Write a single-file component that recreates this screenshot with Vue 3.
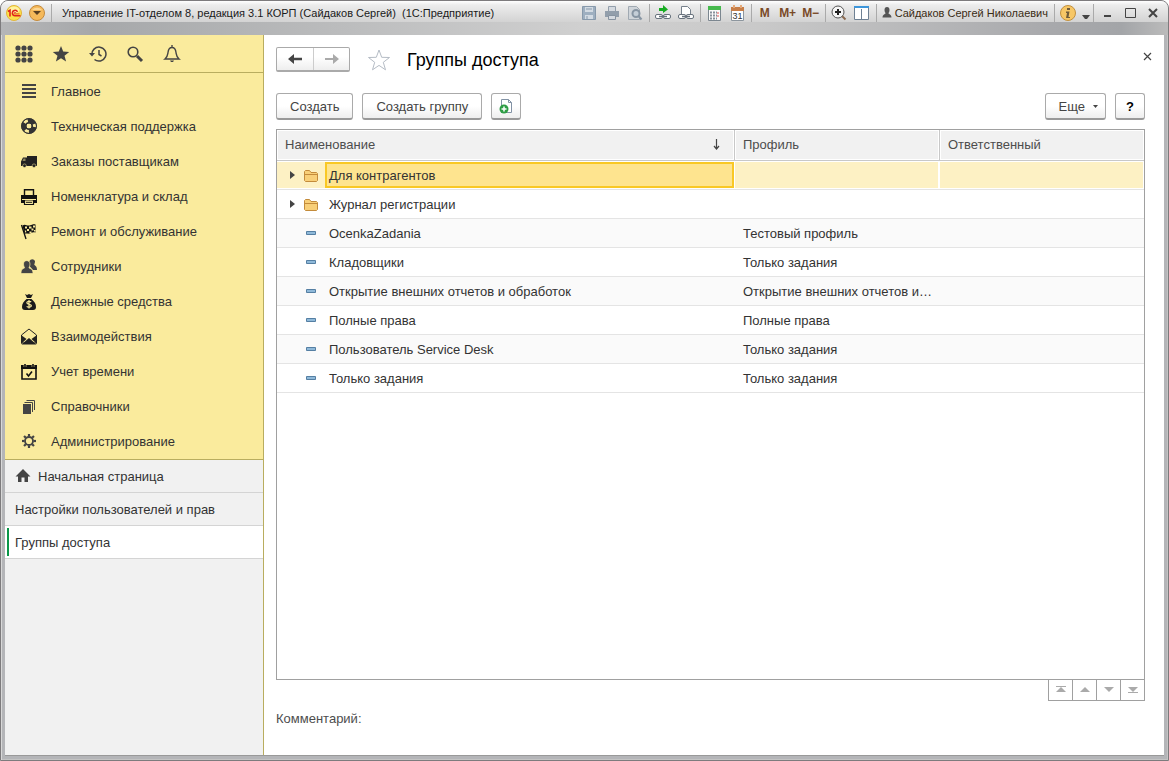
<script setup>
import { ref } from 'vue'

const sections = [
  { icon: 'lines', label: 'Главное' },
  { icon: 'support', label: 'Техническая поддержка' },
  { icon: 'truck', label: 'Заказы поставщикам' },
  { icon: 'printer', label: 'Номенклатура и склад' },
  { icon: 'flag', label: 'Ремонт и обслуживание' },
  { icon: 'people', label: 'Сотрудники' },
  { icon: 'money', label: 'Денежные средства' },
  { icon: 'mail', label: 'Взаимодействия' },
  { icon: 'calendar', label: 'Учет времени' },
  { icon: 'books', label: 'Справочники' },
  { icon: 'gear', label: 'Администрирование' },
]

const rows = [
  { name: 'Для контрагентов', profile: '', folder: true },
  { name: 'Журнал регистрации', profile: '', folder: true },
  { name: 'OcenkaZadania', profile: 'Тестовый профиль' },
  { name: 'Кладовщики', profile: 'Только задания' },
  { name: 'Открытие внешних отчетов и обработок', profile: 'Открытие внешних отчетов и…' },
  { name: 'Полные права', profile: 'Полные права' },
  { name: 'Пользователь Service Desk', profile: 'Только задания' },
  { name: 'Только задания', profile: 'Только задания' },
]

const selected = ref(0)
const comment = ref('')
const teeth = [0, 45, 90, 135, 180, 225, 270, 315]
</script>

<template>
  <div class="window">
    <header class="titlebar">
      <button class="tb" aria-label="1С">
        <svg width="16" height="16" viewBox="0 0 16 16">
          <circle cx="8" cy="8" r="7.5" fill="#fbe04a" stroke="#e2b53a" />
          <ellipse cx="8" cy="5" rx="5.5" ry="3.5" fill="#fff3a0" />
          <path d="M2 6.500l2-1.300V11.500" fill="none" stroke="#e0241c" stroke-width="1.600" />
          <path d="M11.500 6.800A2.700 2.700 0 1 0 9 10.700H14.500" fill="none" stroke="#e0241c" stroke-width="1.500" />
          <path d="M9.800 8a.8.8 0 1 0-.8.900H13.500" fill="none" stroke="#e0241c" stroke-width=".8" />
        </svg>
      </button>
      <button class="tb drop" aria-label="Главное меню">
        <svg width="16" height="16" viewBox="0 0 16 16">
          <circle cx="8" cy="8" r="7.5" fill="#f5b95a" stroke="#c48a3c" />
          <path d="M3 5a6 5 0 0 1 10 0z" fill="#fbd795" />
          <path d="M4 6h8l-4 4z" fill="#5a4022" />
        </svg>
      </button>
      <i class="sep"></i>
      <h1 class="caption">Управление IT-отделом 8, редакция 3.1 КОРП (Сайдаков Сергей)&nbsp; (1С:Предприятие)</h1>
      <div class="tools">
        <button class="tb" aria-label="Сохранить">
          <svg width="16" height="16" viewBox="0 0 16 16">
            <path d="M1.5 1.5h13v13h-13z" fill="#9eafc0" stroke="#8799ab" />
            <path d="M4 2h8v5H4zM4 10h8v4H4z" fill="#d3dbe3" /><path d="M5 4h6M6 11v3" stroke="#8799ab" />
          </svg>
        </button>
        <button class="tb" aria-label="Печать">
          <svg width="16" height="16" viewBox="0 0 16 16">
            <path d="M4.5 6V1.5h7V6" fill="#d5dae0" stroke="#929eab" />
            <path d="M1 6h14v6H1z" fill="#929eab" /><path d="M4.5 10.5h7v4h-7z" fill="#d5dae0" stroke="#8793a0" />
          </svg>
        </button>
        <button class="tb" aria-label="Предварительный просмотр">
          <svg width="16" height="16" viewBox="0 0 16 16">
            <path d="M1.500 1.500h8l3 3v10h-11z" fill="#d0d5da" stroke="#a0a9b2" />
            <circle cx="9" cy="8.500" r="3.500" fill="#c4ced7" stroke="#8795a3" stroke-width="2" /><path d="M11.500 11l3 3.500" stroke="#8795a3" stroke-width="2" />
          </svg>
        </button>
        <i class="sep"></i>
        <button class="tb" aria-label="Перейти по ссылке">
          <svg width="16" height="16" viewBox="0 0 16 16">
            <path d="M4 3h4V0l5 4.500L8 8V6H4z" fill="#18ad23" />
            <rect x="0.500" y="9.500" width="7" height="4" rx="1.500" fill="#fff" stroke="#68727d" /><rect x="8.500" y="9.500" width="7" height="4" rx="1.500" fill="#fff" stroke="#68727d" />
            <path d="M4 11.500h8" stroke="#68727d" stroke-width="1.500" />
          </svg>
        </button>
        <button class="tb" aria-label="Получить ссылку">
          <svg width="16" height="16" viewBox="0 0 16 16">
            <path d="M3.500 9V1.500h6l3 3V9" fill="#fff" stroke="#77818c" />
            <rect x="0.500" y="9.500" width="7" height="4" rx="1.500" fill="#fff" stroke="#68727d" /><rect x="8.500" y="9.500" width="7" height="4" rx="1.500" fill="#fff" stroke="#68727d" />
            <path d="M4 11.500h8" stroke="#68727d" stroke-width="1.500" />
          </svg>
        </button>
        <i class="sep"></i>
        <button class="tb" aria-label="Калькулятор">
          <svg width="16" height="16" viewBox="0 0 16 16">
            <path d="M2.500 1.500h12v14h-12z" fill="#fafafa" stroke="#7c8790" /><path d="M2 1h13v4H2z" fill="#46b94d" />
            <path d="M4 7.500h7M4 10.500h7M4 13.500h7" stroke="#87919b" stroke-width="2" stroke-dasharray="2 1" /><path d="M12 7v5" stroke="#e05050" stroke-dasharray="2 1" />
          </svg>
        </button>
        <button class="tb" aria-label="Календарь">
          <svg width="16" height="16" viewBox="0 0 16 16">
            <path d="M2.500 3.500h12v12h-12z" fill="#fff" stroke="#8d969e" /><path d="M2 2h13v4H2z" fill="#c77e48" /><path d="M5 0v3M12 0v3" stroke="#e5aa7a" stroke-width="2" />
            <text x="8.500" y="14" text-anchor="middle" font-family="Liberation Sans" font-size="9" fill="#333">31</text>
          </svg>
        </button>
        <i class="sep"></i>
        <button class="tb mem">M</button>
        <button class="tb mem">M+</button>
        <button class="tb mem">M−</button>
        <i class="sep"></i>
        <button class="tb" aria-label="Увеличить">
          <svg width="16" height="16" viewBox="0 0 16 16">
            <path d="M11 11l3.500 3.500" stroke="#8a6a50" stroke-width="2" /><circle cx="7" cy="7" r="6" fill="#f6f6f6" stroke="#555" />
            <path d="M4 7h6M7 4v6" stroke="#222" stroke-width="2" />
          </svg>
        </button>
        <button class="tb" aria-label="Панели">
          <svg width="16" height="16" viewBox="0 0 16 16">
            <path d="M.5 1.500h14v13H.5zM7.500 4v11" fill="#fff" stroke="#6e8093" /><path d="M0 1h15v2H0z" fill="#3d96db" />
          </svg>
        </button>
        <i class="sep"></i>
        <button class="tb user">
          <svg width="10" height="12" viewBox="0 0 10 12">
            <path d="M2.500 3a2.500 3 0 0 1 5 0c0 2-1 2.500-1 3.500C8 7.500 9.500 8 9.500 10.500h-9C.5 8 2 7.500 3.500 6.500 3.500 5.500 2.500 5 2.500 3z" fill="#555" />
          </svg>
          Сайдаков Сергей Николаевич
        </button>
        <i class="sep"></i>
        <button class="tb" aria-label="Информация">
          <svg width="16" height="16" viewBox="0 0 16 16">
            <circle cx="8" cy="8" r="7.500" fill="#f7c766" stroke="#c2903e" /><path d="M7 3h3v2H7zM6 6.500h3.500L8.500 12H10v1H6l1-5H6z" fill="#705c3a" />
          </svg>
        </button>
        <button class="tb service" aria-label="Сервис">
          <svg width="8" height="16" viewBox="0 0 8 16"><path d="M0 10h8l-3 4H3z" fill="#444" /></svg>
        </button>
        <i class="sep"></i>
        <button class="tb" aria-label="Свернуть">
          <svg width="16" height="12" viewBox="0 0 16 12"><path d="M5 9h7" stroke="#444" stroke-width="2" /></svg>
        </button>
        <button class="tb" aria-label="Развернуть">
          <svg width="16" height="12" viewBox="0 0 16 12"><path d="M3.500 1.500h10v9h-10z" fill="none" stroke="#444" /></svg>
        </button>
        <button class="tb" aria-label="Закрыть">
          <svg width="16" height="12" viewBox="0 0 16 12"><path d="M4 2l8 8M12 2l-8 8" stroke="#444" stroke-width="2" /></svg>
        </button>
      </div>
    </header>

    <div class="body">
      <aside class="sidebar">
        <div class="quick">
          <button aria-label="Все функции">
            <svg width="18" height="18" viewBox="0 0 18 18" fill="#444">
              <template v-for="y in 3" :key="y"><circle v-for="x in 3" :key="x" :cx="x * 6 - 3" :cy="y * 6 - 3" r="2.600" /></template>
            </svg>
          </button>
          <button aria-label="Избранное">
            <svg width="18" height="18" viewBox="0 0 18 18"><path d="M9 1l2.200 5.600 6 .4-4.700 3.700 1.600 5.900L9 13.300l-5.100 3.300 1.600-5.900L.8 7l6-.4z" fill="#444" /></svg>
          </button>
          <button aria-label="История">
            <svg width="18" height="18" viewBox="0 0 18 18" fill="none" stroke="#444" stroke-width="1.500"><path d="M3 10a7 7 0 1 1 2.500 4.500M10 5v4.500l2.500 1.500" /><path d="M0 8h6l-3 3.500z" fill="#444" stroke="none" /></svg>
          </button>
          <button aria-label="Поиск">
            <svg width="18" height="18" viewBox="0 0 18 18" fill="none" stroke="#444"><circle cx="7" cy="7" r="4.800" stroke-width="1.600" /><path d="M11 11l5 5" stroke-width="3" /></svg>
          </button>
          <button aria-label="Оповещения">
            <svg width="18" height="18" viewBox="0 0 18 18" fill="none" stroke="#444" stroke-width="1.400"><path d="M2 14c2.500-2 2.500-3.500 3-6.500.3-3 1.500-5 4-5s3.700 2 4 5c.5 3 .5 4.500 3 6.500zM9 0v2.500" /><path d="M7 15.500h4L10 17H8z" fill="#444" stroke="none" /></svg>
          </button>
        </div>

        <nav class="sections">
          <a v-for="s in sections" :key="s.label" href="#" @click.prevent>
            <svg width="18" height="18" viewBox="0 0 18 18">
              <path v-if="s.icon === 'lines'" d="M2 2h14M2 6h14M2 10h14M2 14h14" stroke="#444" stroke-width="2" />
              <g v-else-if="s.icon === 'support'" fill="none">
                <circle cx="9" cy="8" r="5.300" stroke="#333" stroke-width="5" />
                <circle cx="9" cy="8" r="5.500" stroke="#faeb9d" stroke-width="3" stroke-dasharray="4 7.520" stroke-dashoffset="3" />
                <circle cx="9" cy="8" r="7.500" stroke="#333" /><circle cx="9" cy="8" r="3" stroke="#333" />
              </g>
              <g v-else-if="s.icon === 'truck'">
                <path d="M7 3h10v10H1V8.500L3 4.500h4z" fill="#222" /><path d="M3.500 5.500h2v2.500h-3z" fill="#8d8660" />
                <circle cx="4.500" cy="12.700" r="1.800" fill="#222" stroke="#faeb9d" stroke-width=".5" /><circle cx="14" cy="12.700" r="1.800" fill="#222" stroke="#faeb9d" stroke-width=".5" />
              </g>
              <g v-else-if="s.icon === 'printer'">
                <path d="M4.500 8V1.700h9V8" fill="none" stroke="#111" stroke-width="1.400" /><path d="M1 7h16v8H1z" fill="#111" />
                <path d="M4.500 12h9v4.500h-9z" fill="#faeb9d" stroke="#111" stroke-width="1.200" /><path d="M2 11.500h14M6 14.500h6" stroke="#faeb9d" /><path d="M6 14.300h6" stroke="#111" />
              </g>
              <g v-else-if="s.icon === 'flag'">
                <path d="M1.500 2l4.500 14" stroke="#111" stroke-width="1.300" />
                <path d="M2.500 2.500c3-2 4 .5 7 0s3-1.500 6-1v8c-3-1-4 .5-6 1s-3-.5-5 .5z" fill="#111" />
                <path d="M5 3.500h2v2H5zM9 3.500h2.500v2H9zM13 2.500h2v2h-2zM7 6h2v2H7zM11.500 5.500h2v2h-2zM9.500 8.500h2V10h-2zM14 7h1.500v1.500H14zM4.700 7.500h1.500v2h-1z" fill="#faeb9d" />
              </g>
              <g v-else-if="s.icon === 'people'" fill="#444">
                <path d="M9.500 3a3 3 0 0 1 5.500 0c0 2-.6 3-.8 3.800C16 8.500 17 9 17 12h-4L9.500 8z" />
                <path d="M3.500 6c0-4.500 6.500-4.500 6.500 0 0 2-1 3-1 4 2 1 4 1.200 4 5.500H1c0-4.300 1.500-4.500 3.500-5.500 0-1-1-2-1-4z" stroke="#faeb9d" stroke-width=".7" />
              </g>
              <g v-else-if="s.icon === 'money'">
                <path d="M5 1l2 1 2-1 2 1 2-1-2 4H7zM6.500 6h5c3 2.500 4.500 5 4.500 8 0 2-1 3-3 3H5c-2 0-3-1-3-3 0-3 1.500-5.500 4.500-8z" fill="#1a1a1a" />
                <path d="M11.200 9c-1-1-4.400-1-4.400.8 0 2 4.600 1 4.600 3 0 1.700-3.600 1.700-4.700.6M9 7v8.500" fill="none" stroke="#faeb9d" stroke-width="1.200" />
              </g>
              <g v-else-if="s.icon === 'mail'">
                <path d="M1.500 7L9 1 16.500 7v8h-15z" fill="none" stroke="#222" /><path d="M1 7l5.500 4L1 16zM17 7l-5.500 4 5.500 5zM1.500 16.500L9 10l7.500 6.500z" fill="#222" />
              </g>
              <g v-else-if="s.icon === 'calendar'">
                <path d="M2 4h14v12H2z" fill="none" stroke="#111" stroke-width="1.600" /><path d="M1 2h16v4H1z" fill="#111" />
                <path d="M5 1v3M13 1v3" stroke="#faeb9d" stroke-width="2.600" /><path d="M5 1v3M13 1v3M6.500 10.500l2 2.500L12 8.500" fill="none" stroke="#111" stroke-width="1.600" />
              </g>
              <g v-else-if="s.icon === 'books'" fill="none" stroke="#444">
                <path d="M3 6h8v10H3z" fill="#444" stroke="none" /><path d="M4.500 4.500h8V14M6.500 2.500h8V12" />
              </g>
              <g v-else transform="translate(9 8)">
                <circle r="4" fill="none" stroke="#444" stroke-width="1.800" />
                <path v-for="t in teeth" :key="t" d="M0-4.500V-7" :transform="`rotate(${t})`" stroke="#444" stroke-width="2.200" />
              </g>
            </svg>
            <span>{{ s.label }}</span>
          </a>
        </nav>

        <nav class="tabs">
          <a href="#" @click.prevent>
            <svg width="16" height="14" viewBox="0 0 16 14"><path d="M8 0l7.500 7.500H13V13H9.500V8.500h-3V13H3V7.500H.5z" fill="#444" /></svg>
            Начальная страница
          </a>
          <a href="#" @click.prevent>Настройки пользователей и прав</a>
          <a href="#" class="current" @click.prevent>Группы доступа</a>
        </nav>
      </aside>

      <main class="form">
        <div class="heading">
          <div class="history">
            <button aria-label="Назад"><svg width="14" height="12" viewBox="0 0 14 12"><path d="M0 6l6-5v3.700h8v2.600H6V11z" fill="#444" /></svg></button>
            <button aria-label="Вперед"><svg width="14" height="12" viewBox="0 0 14 12"><path d="M14 6L8 1v4H0v2h8v4z" fill="#aaa" /></svg></button>
          </div>
          <button class="plain star" aria-label="В избранное">
            <svg width="24" height="24" viewBox="0 0 24 24"><path d="M12 2l2.700 7.300 7.800.2-6.200 4.800 2.200 7.500L12 17.400l-6.500 4.400 2.200-7.500L1.500 9.500l7.800-.2z" fill="none" stroke="#b5bcc5" /></svg>
          </button>
          <h2>Группы доступа</h2>
          <button class="plain close" aria-label="Закрыть форму">
            <svg width="9" height="9" viewBox="0 0 9 9"><path d="M1 1l7 7M8 1L1 8" stroke="#444" stroke-width="1.200" /></svg>
          </button>
        </div>

        <div class="toolbar">
          <button class="btn">Создать</button>
          <button class="btn">Создать группу</button>
          <button class="btn square" aria-label="Создать копированием">
            <svg width="16" height="16" viewBox="0 0 16 16">
              <path d="M3.500 1.500h7l3 3v10h-10z" fill="#fff" stroke="#8292a5" /><path d="M10.500 1.500v3h3" fill="none" stroke="#8292a5" />
              <circle cx="6" cy="11" r="4.500" fill="#2e9d45" /><path d="M3.500 11h5M6 8.500v5" stroke="#fff" stroke-width="1.500" />
            </svg>
          </button>
          <span class="grow"></span>
          <button class="btn more">Еще <svg width="5" height="3" viewBox="0 0 5 3"><path d="M0 0h5L2.500 3z" fill="#444" /></svg></button>
          <button class="btn square help">?</button>
        </div>

        <div class="list">
          <table>
            <colgroup><col /><col class="side" /><col class="side" /></colgroup>
            <thead>
              <tr>
                <th><div class="head">Наименование <svg width="7" height="11" viewBox="0 0 7 11"><path d="M3.500 0v10M1 7l2.500 3L6 7" fill="none" stroke="#444" stroke-width="1.200" /></svg></div></th>
                <th><div class="head">Профиль</div></th>
                <th><div class="head">Ответственный</div></th>
              </tr>
            </thead>
            <tbody>
              <tr v-for="(r, i) in rows" :key="r.name" :class="{ selected: i === selected }" @click="selected = i">
                <td>
                  <div class="cell name">
                    <button v-if="r.folder" class="plain expand" aria-label="Развернуть группу"><svg width="5" height="8" viewBox="0 0 5 8"><path d="M0 0l5 4-5 4z" fill="#444" /></svg></button>
                    <span v-else class="expand"></span>
                    <svg v-if="r.folder" class="kind" width="16" height="16" viewBox="0 0 16 16"><path d="M1.500 13.500v-9l1-1h4l1.500 2h5.500l1 1v7l-1 1h-11z" fill="#f8cf78" stroke="#c38b3b" /><path d="M2 7.500h12" stroke="#c38b3b" /></svg>
                    <svg v-else class="kind" width="16" height="16" viewBox="0 0 16 16"><path d="M3.500 6.500h9v3h-9z" fill="#8fb9d9" stroke="#557fa3" /></svg>
                    <span class="label">{{ r.name }}</span>
                  </div>
                </td>
                <td><div class="cell text">{{ r.profile }}</div></td>
                <td><div class="cell text"></div></td>
              </tr>
            </tbody>
          </table>
        </div>
        <div class="pager">
          <button aria-label="В начало"><svg width="10" height="8" viewBox="0 0 10 8"><path d="M0 .5h10" stroke="#aaa" /><path d="M5 1l5 5H0z" fill="#aaa" /></svg></button>
          <button aria-label="Вверх"><svg width="10" height="8" viewBox="0 0 10 8"><path d="M5 1l5 5H0z" fill="#aaa" /></svg></button>
          <button aria-label="Вниз"><svg width="10" height="8" viewBox="0 0 10 8"><path d="M5 6l5-5H0z" fill="#aaa" /></svg></button>
          <button aria-label="В конец"><svg width="10" height="8" viewBox="0 0 10 8"><path d="M0 6.500h10" stroke="#aaa" /><path d="M5 6l5-5H0z" fill="#aaa" /></svg></button>
        </div>
        <div class="comment">
          <label for="comment">Комментарий:</label>
          <input id="comment" v-model="comment" type="text" />
        </div>
      </main>
    </div>
  </div>
</template>

<style>
html, body { background: #fff; }
</style>

<style scoped>
* { box-sizing: border-box; }
.window {
  display: flex; flex-direction: column; min-height: 100vh;
  padding: 0 4px 4px; border: 1px solid #7d7b7d; border-radius: 8px 8px 0 0;
  background: #b4b5b8;
  box-shadow: inset 1px 1px 0 #d8d8d8, inset -1px -1px 0 #c4c4c4;
  font: 13px/15px "Liberation Sans", Arial, sans-serif; color: #333;
}
button { font: inherit; color: inherit; padding: 0; margin: 0; border: 0; background: none; cursor: pointer; }
svg { display: block; flex: none; }
a { color: inherit; text-decoration: none; }
i.sep { width: 1px; height: 18px; background: #aaa; flex: none; }

.titlebar {
  display: flex; align-items: center; height: 34px; padding: 0 7px 10px 1px; margin: 0 -4px; border-radius: 7px 7px 0 0;
  background:
    linear-gradient(#fff 0, #ececec 4px, #d3d3d3 21px, transparent 21px),
    linear-gradient(90deg, #b5b6b8, #a6a8aa 8%, #d0d0d0 50%, #c9c9c9 65%, #a8a9ac 90%, #a3a5a8 96%, #bbb);
  font-size: 11px; line-height: 14px; color: #1a1a1a;
}
.titlebar > .tb { margin-left: 4px; }
.titlebar > .drop { margin: 0 6px 0 7px; }
.caption { flex: 1; margin: 0 0 0 10px; font-size: 11px; font-weight: 400; white-space: nowrap; overflow: hidden; }
.tools { display: flex; align-items: center; gap: 7px; }
.tools .sep { margin: 0 -2px 0 -1px; }
.tools .service { margin: 0 -3px 0 -1px; }
.mem { width: 16px; display: flex; justify-content: center; font-weight: 700; font-size: 12px; color: #7a4a28; }
.user { display: flex; align-items: center; gap: 3px; color: #3a2c14; white-space: nowrap; }

.body { flex: 1; display: flex; background: #fff; border-bottom: 1px solid #999; }
.sidebar { width: 259px; flex: none; display: flex; flex-direction: column; background: #f1f1f1; border-right: 1px solid #b9ad5f; }
.quick { display: flex; gap: 19px; align-items: center; height: 38px; padding: 0 9px 0 10px; background: #faeb9d; border-bottom: 1px solid #b9ad5f; }
.sections { padding-top: 1px; background: #faeb9d; border-bottom: 1px solid #b9ad5f; }
.sections a { display: flex; align-items: center; gap: 13px; height: 35px; padding-left: 15px; }
.tabs a { display: flex; align-items: center; gap: 7px; height: 33px; padding-left: 10px; border-bottom: 1px solid #d4d4d4; }
.tabs .current { background: linear-gradient(#0a9648, #0a9648) 2px 2px / 2px 28px no-repeat #fff; }

.form { flex: 1; min-width: 0; display: flex; flex-direction: column; padding: 12px 19px 28px 12px; }
.heading { display: flex; align-items: center; height: 25px; }
.history { display: flex; height: 25px; border: 1px solid #aaa; border-bottom: 2px solid #aaa; border-radius: 2px; background: linear-gradient(#fff 40%, #eee); }
.history button { width: 36px; display: flex; align-items: center; justify-content: center; }
.history button + button { border-left: 1px solid #ccc; }
.star { margin: 0 16px 0 17px; }
h2 { margin: 0; flex: 1; font-size: 18px; line-height: 26px; font-weight: 400; color: #000; }
.close { align-self: flex-start; margin: 5px -8px 0 0; padding: 0 1px; }
.toolbar { display: flex; gap: 9px; margin: 21px 0 9px; height: 27px; }
.btn { height: 27px; padding: 0 13px; border: 1px solid #aaa; border-bottom: 2px solid #999; border-radius: 3px; background: linear-gradient(#fff 50%, #eee); color: #444; }
.square { width: 30px; padding: 0; display: flex; align-items: center; justify-content: center; }
.more { display: flex; align-items: center; gap: 8px; padding: 0 7px 0 13px; }
.help { color: #000; font-weight: 700; }
.grow { flex: 1; }

.list { flex: 1; border: 1px solid #a0a0a0; }
table { width: 100%; table-layout: fixed; border-spacing: 0; }
.side { width: 205px; }
th { height: 31px; padding: 1px; text-align: left; font-weight: 400; color: #4d4d4d; border-bottom: 1px solid #c8c8c8; }
th + th { border-left: 1px solid #c8c8c8; }
.head { display: flex; align-items: center; justify-content: space-between; height: 28px; padding: 0 13px 2px 7px; background: #f1f1f1; }
td { height: 29px; padding: 1px 0; border-bottom: 1px solid #e4e4e4; }
tr:nth-child(odd) td { background: #fafafa; }
tbody tr.selected td { background: #fff; }
.cell { height: 26px; line-height: 28px; white-space: nowrap; overflow: hidden; }
.text { padding: 0 4px 0 8px; margin: 0 1px 0 1px; }
.name { display: flex; align-items: center; }
.expand { box-sizing: content-box; width: 5px; padding-left: 8px; margin: 0 5px; }
.expand + .kind { margin: 0 6px 0 3px; }
.label { flex: 1; height: 26px; line-height: 24px; border: 2px solid transparent; padding-left: 2px; }
.selected .cell { background: #fdf1c4; }
.selected .label { background: #fee48f; border-color: #f9c825; }
.pager { align-self: flex-end; display: flex; border-left: 1px solid #a0a0a0; }
.pager button { width: 24px; height: 21px; display: flex; align-items: center; justify-content: center; border: solid #a0a0a0; border-width: 0 1px 1px 0; }
.comment { display: flex; align-items: center; margin-top: 8px; height: 18px; color: #4d4d4d; }
.comment input { flex: 1; border: 0; outline: 0; background: transparent; font: inherit; padding: 0 6px; }
</style>
